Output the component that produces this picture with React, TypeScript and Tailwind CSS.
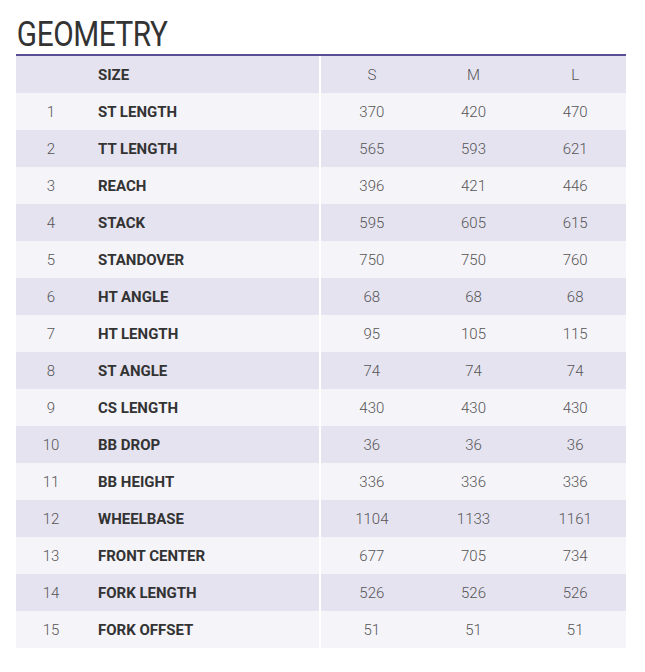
const sizes = ["S", "M", "L"];

const rows: [string, number, number, number][] = [
  ["ST LENGTH", 370, 420, 470],
  ["TT LENGTH", 565, 593, 621],
  ["REACH", 396, 421, 446],
  ["STACK", 595, 605, 615],
  ["STANDOVER", 750, 750, 760],
  ["HT ANGLE", 68, 68, 68],
  ["HT LENGTH", 95, 105, 115],
  ["ST ANGLE", 74, 74, 74],
  ["CS LENGTH", 430, 430, 430],
  ["BB DROP", 36, 36, 36],
  ["BB HEIGHT", 336, 336, 336],
  ["WHEELBASE", 1104, 1133, 1161],
  ["FRONT CENTER", 677, 705, 734],
  ["FORK LENGTH", 526, 526, 526],
  ["FORK OFFSET", 51, 51, 51],
];

function Row({ idx, label, vals, shade }: { idx: string; label: string; vals: (string | number)[]; shade: boolean }) {
  return (
    <div className={`flex h-[37px] text-[15px] ${shade ? "bg-[#e5e3f0]" : "bg-[#f5f4f9]"}`}>
      <div className="w-[70px] flex items-center justify-center pt-[2px] font-light text-[#555]">{idx}</div>
      <div className="w-[235px] flex items-center pl-[12px] pt-[2px] font-bold text-[#333] border-r-2 border-white">
        {label}
      </div>
      {vals.map((v, i) => (
        <div key={i} className="flex-1 flex items-center justify-center pt-[2px] font-light text-[#555]">
          {v}
        </div>
      ))}
    </div>
  );
}

export default function App() {
  return (
    <div className="w-[645px] h-[672px] bg-white pt-[17px] font-['Roboto',sans-serif]">
      <div className="ml-[16px] w-[610px]">
        <h1 className="text-[35px] leading-[36px] text-[#333] font-normal tracking-[-0.5px] pl-[1px] origin-left scale-x-[0.85]">
          GEOMETRY
        </h1>
        <div className="h-[2px] bg-[#5a4f96] mt-[1px]" />
        <Row idx="" label="SIZE" vals={sizes} shade />
        {rows.map(([label, s, m, l], i) => (
          <Row key={label} idx={String(i + 1)} label={label} vals={[s, m, l]} shade={i % 2 === 1} />
        ))}
      </div>
    </div>
  );
}
